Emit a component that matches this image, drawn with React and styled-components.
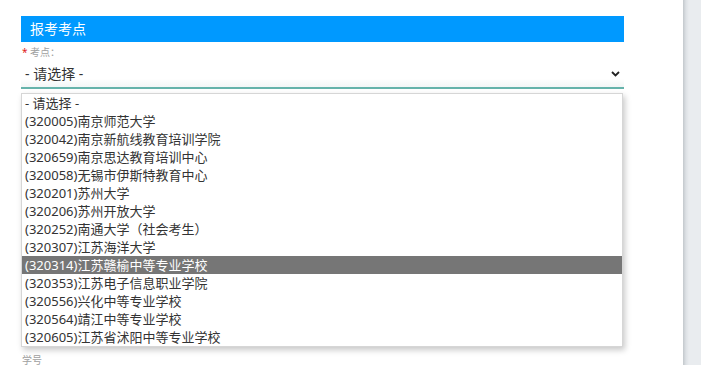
import React from 'react';
import styled, { createGlobalStyle } from 'styled-components';

const GlobalStyle = createGlobalStyle`
  html, body {
    margin: 0;
    padding: 0;
    background: #fff;
    font-family: "Noto Sans", "Noto Sans CJK SC", sans-serif;
  }
`;

const options = [
  '- 请选择 -',
  '(320005)南京师范大学',
  '(320042)南京新航线教育培训学院',
  '(320659)南京思达教育培训中心',
  '(320058)无锡市伊斯特教育中心',
  '(320201)苏州大学',
  '(320206)苏州开放大学',
  '(320252)南通大学（社会考生）',
  '(320307)江苏海洋大学',
  '(320314)江苏赣榆中等专业学校',
  '(320353)江苏电子信息职业学院',
  '(320556)兴化中等专业学校',
  '(320564)靖江中等专业学校',
  '(320605)江苏省沭阳中等专业学校',
];

export default function App() {
  return (
    <>
      <GlobalStyle />
      <Page>
        <Main>
          <Section>
            <SectionTitle>报考考点</SectionTitle>
            <Field>
              <Label><Star>*</Star> 考点：</Label>
              <SelectBox>
                <span>- 请选择 -</span>
                <svg width="9" height="6" viewBox="0 0 9 6">
                  <path d="M1 1l3.5 3.5L8 1" fill="none" stroke="#222" strokeWidth="1.8" />
                </svg>
              </SelectBox>
              <Dropdown>
                {options.map((o, i) => (
                  <Option key={o} $active={i === 9}>{o}</Option>
                ))}
              </Dropdown>
            </Field>
            <Field>
              <Label>学号</Label>
            </Field>
          </Section>
        </Main>
        <Side />
      </Page>
    </>
  );
}

const Page = styled.div`
  display: flex;
  height: 365px;
  overflow: hidden;
`;

const Main = styled.div`
  width: 683px;
  padding: 16px 0 0 21px;
  box-sizing: border-box;
`;

const Side = styled.div`
  flex: 1;
  background: linear-gradient(to right, #c3c8cc 0px, #dde1e5 3px, #e9ecef 6px);
`;

const Section = styled.div`
  width: 603px;
`;

const SectionTitle = styled.div`
  height: 26px;
  background: #0099ff;
  color: #fff;
  font-size: 14px;
  line-height: 26px;
  padding-left: 9px;
`;

const Field = styled.div`
  position: relative;
  margin-top: 3px;
  & + & {
    margin-top: 264px;
  }
`;

const Label = styled.div`
  font-size: 10px;
  line-height: 14px;
  color: #a0a0a0;
  padding-left: 1px;
`;

const Star = styled.span`
  color: #e02020;
`;

const SelectBox = styled.div`
  display: flex;
  align-items: center;
  justify-content: space-between;
  height: 28px;
  padding: 0 4px 0 4px;
  font-size: 14px;
  color: #333;
  border-bottom: 2px solid #66b3ab;
  background: linear-gradient(to bottom, #fff 70%, #f3f6f6 100%);
  svg {
    margin-top: 2px;
  }
`;

const Dropdown = styled.div`
  position: absolute;
  top: 48px;
  left: 0;
  width: 600px;
  background: #fff;
  border: 1px solid #d6d6d6;
  box-shadow: 2px 3px 6px rgba(0, 0, 0, 0.22);
  z-index: 2;
`;

const Option = styled.div`
  height: 18px;
  line-height: 18px;
  font-size: 13px;
  padding-left: 3px;
  white-space: nowrap;
  color: ${(p) => (p.$active ? '#fff' : '#333')};
  background: ${(p) => (p.$active ? '#767676' : 'transparent')};
`;
